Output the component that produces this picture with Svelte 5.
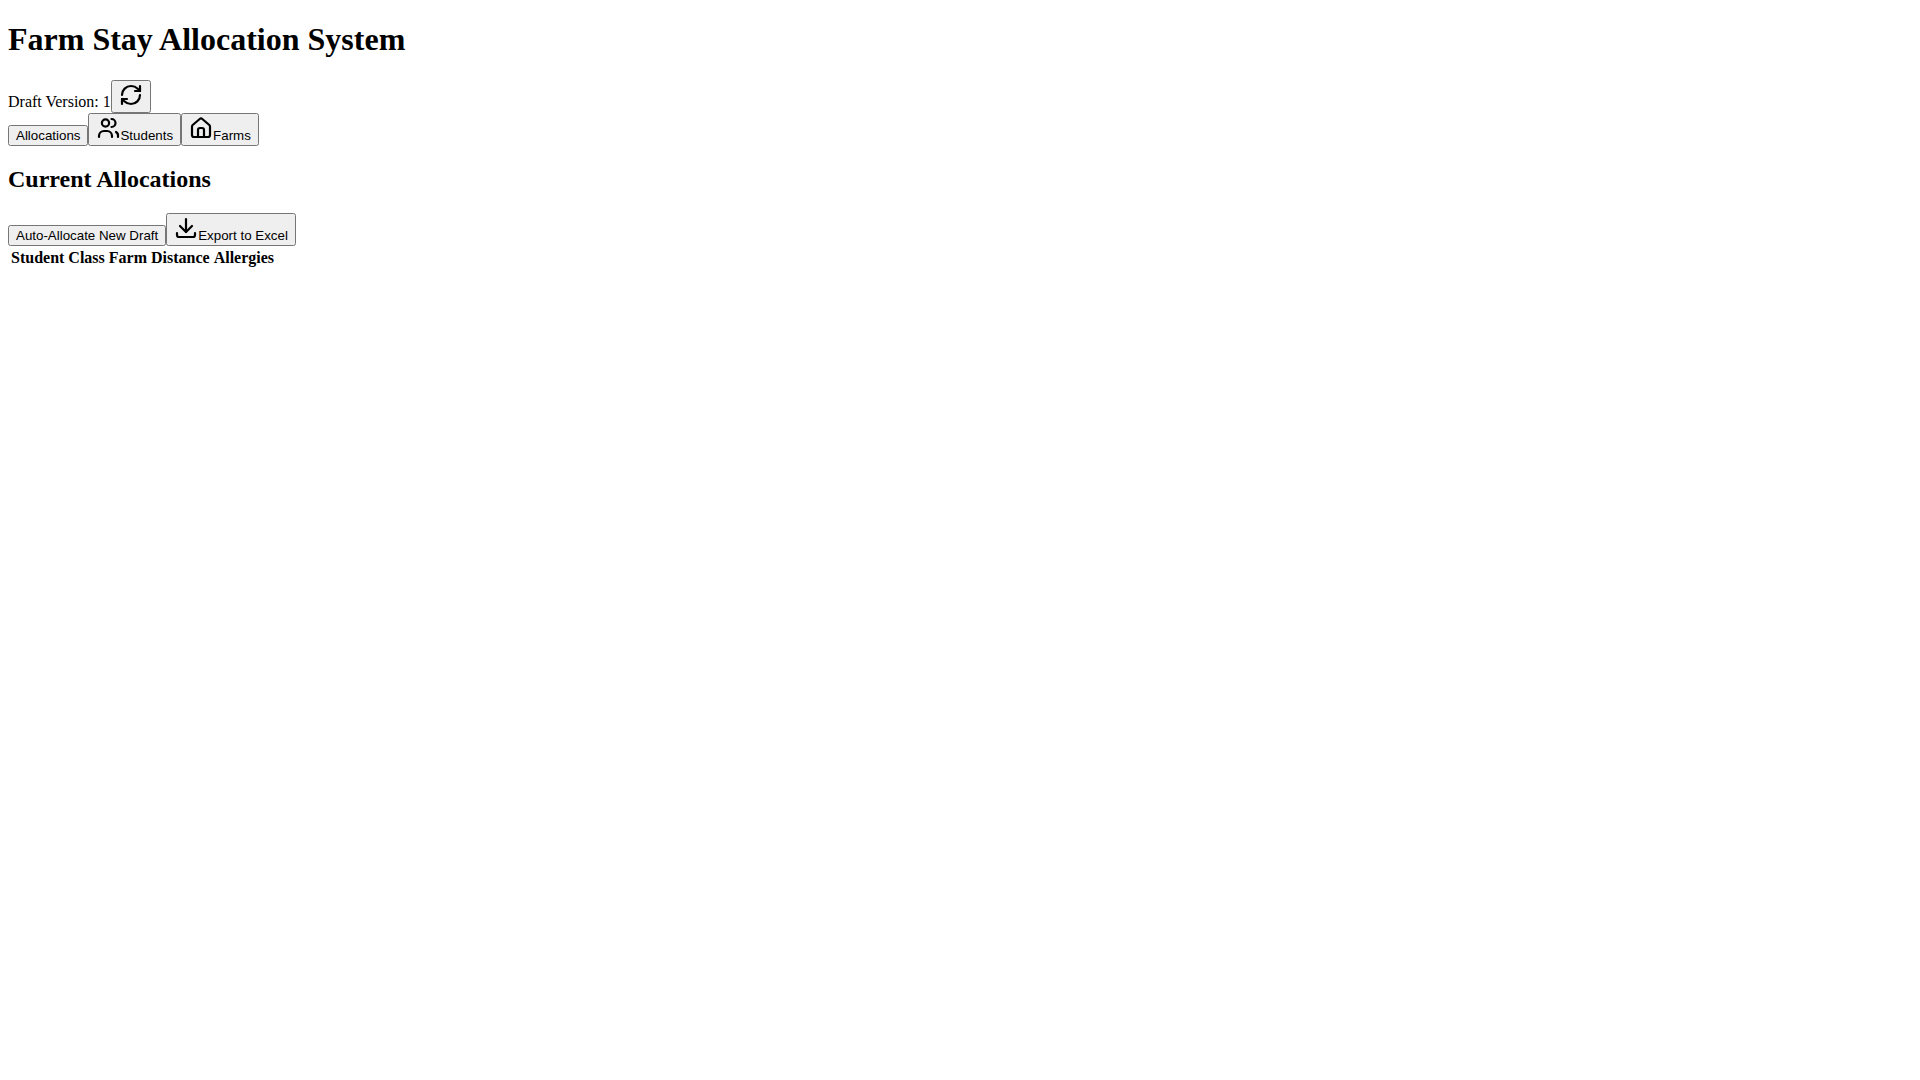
<script>
    let draftVersion = 1;
    const columns = ["Student", "Class", "Farm", "Distance", "Allergies"];
</script>

<style>
    :global(body) {
        margin: 0;
        font-family: "Liberation Serif", serif;
    }

    .page {
        padding: 0 8px;
    }

    button {
        font-family: "Liberation Sans", sans-serif;
    }

    svg {
        fill: none;
        stroke: currentColor;
        stroke-width: 2.2;
        stroke-linecap: round;
        stroke-linejoin: round;
    }
</style>

<div class="page">
    <h1>Farm Stay Allocation System</h1>
    <div>
        <span>Draft Version: {draftVersion}</span><button aria-label="Refresh">
            <svg width="24" height="24" viewBox="0 0 24 24"><path d="M3 12a9 9 0 0 1 9-9 9.75 9.75 0 0 1 6.74 2.74L21 8" /><path d="M21 3v5h-5" /><path d="M21 12a9 9 0 0 1-9 9 9.75 9.75 0 0 1-6.74-2.74L3 16" /><path d="M8 16H3v5" /></svg>
        </button>
    </div>
    <div>
        <button>Allocations</button><button><svg width="24" height="24" viewBox="0 0 24 24"><circle cx="9.5" cy="7" r="3.6" /><path d="M3 21v-1a5 5 0 0 1 5-5h3a5 5 0 0 1 5 5v1" /><path d="M15.5 3a4 4 0 0 1 0 8" /><path d="M20 16a4 4 0 0 1 2 4v1" /></svg>Students</button><button><svg width="24" height="24" viewBox="0 0 24 24"><path d="M3 10.5a2 2 0 0 1 .7-1.5l7-6a2 2 0 0 1 2.6 0l7 6a2 2 0 0 1 .7 1.5V19a2 2 0 0 1-2 2H5a2 2 0 0 1-2-2z" /><path d="M9 21v-7a2 2 0 0 1 2-2h2a2 2 0 0 1 2 2v7" /></svg>Farms</button>
    </div>
    <div>
        <h2>Current Allocations</h2>
        <button>Auto-Allocate New Draft</button><button><svg width="24" height="24" viewBox="0 0 24 24"><path d="M12 3v13" /><path d="M6 10l6 6 6-6" /><path d="M3 17v2a2 2 0 0 0 2 2h14a2 2 0 0 0 2-2v-2" /></svg>Export to Excel</button>
        <table>
            <thead>
                <tr>
                    {#each columns as column}
                        <th>{column}</th>
                    {/each}
                </tr>
            </thead>
            <tbody></tbody>
        </table>
    </div>
</div>
